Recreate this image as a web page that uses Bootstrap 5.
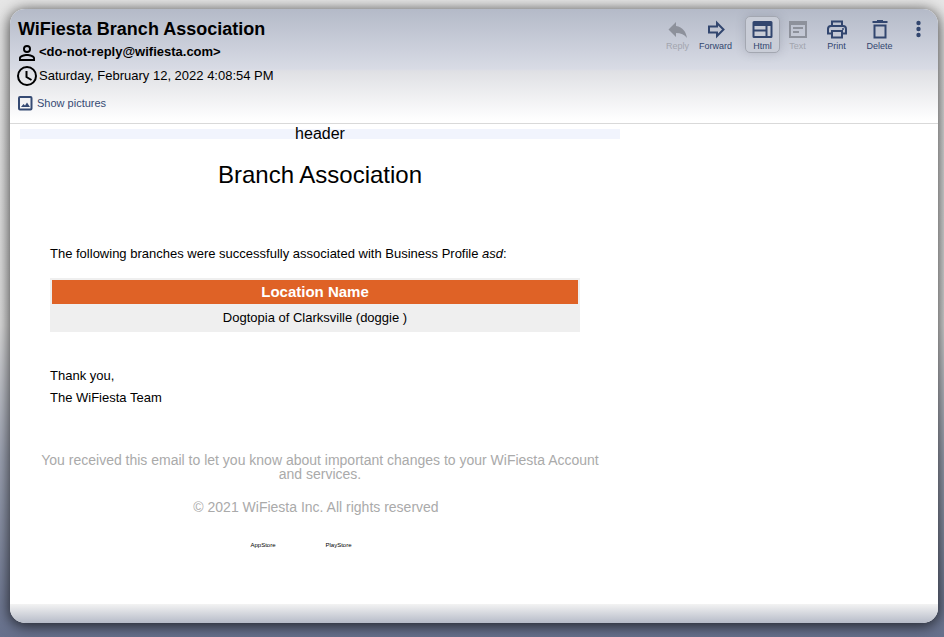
<!DOCTYPE html>
<html lang="en">
<head>
<meta charset="utf-8">
<meta name="viewport" content="width=device-width, initial-scale=1">
<title>WiFiesta Branch Association</title>
<link href="https://cdn.jsdelivr.net/npm/bootstrap@5.3.0/dist/css/bootstrap.min.css" rel="stylesheet">
<style>
html{height:100%;background:linear-gradient(#e6e6e6 0,#dcdcdc 51%,#9ea4b4 72%,#66708c 100%)}
body{min-height:100vh;background:transparent;font-family:"Liberation Sans",Arial,sans-serif;color:#000;font-size:13px;line-height:20px;padding:9px 6px 14px 10px}
.mail-window{border-radius:15px;overflow:hidden;background:#fff;box-shadow:0 2px 14px 1px rgba(0,0,0,.7)}
.mail-head{min-height:115px;padding:9px 3px 0 8px;border-bottom:1px solid #d9d9d9;background:linear-gradient(#b4bac8 0,#d8dbe5 60px,#dfe0e4 62px,#fff 112px)}
.mail-head h1{font-size:18px;line-height:22px;font-weight:700}
.meta-row{line-height:24px;height:24px}
.meta-row svg{margin-left:-2px;margin-right:-1px}
.show-pics{font-size:11px;line-height:16px;color:#354a73;margin-top:7px}
.toolbar-row{margin-top:-2px;column-gap:3px}
.tool{display:flex;flex-direction:column;align-items:center;border:1px solid transparent;border-radius:5px;background:none;color:#32466f;font-size:9px;line-height:10px;padding:2px 0 0;width:35px;height:37px}
.tool:disabled{color:#8d919b}
.tool:disabled span{color:#a2a5ae}
.tool.pressed{border-color:#a3a7b1;background:#c9cdd7;box-shadow:0 0 10px rgba(90,95,110,.25)}
.view-switch{margin:0 1px 0 9px}
.tool-delete{margin-left:5px}
.letter{max-width:600px;margin-left:10px;padding-top:5px}
.banner{background:#f1f4fd;height:10px;line-height:10px;font-size:16px}
.letter h2{font-size:24px;line-height:28px;margin-top:22px;font-weight:400}
.letter-text{padding:0 40px 0 30px;margin-top:55px}
.branches{border-collapse:separate;border-spacing:2px;background:#efefef;margin-top:14px}
.branches th{background:#df6226;color:#fff;font-size:15px;line-height:24px;padding:0}
.branches td{line-height:22px;height:24px;padding:0}
.thanks{line-height:22px;margin-top:33px}
.legal{color:#aaa;font-size:14px;line-height:14px;margin-top:44px}
.rights{margin-top:19px}
.stores{font-size:6px;line-height:8px;gap:50px;margin:27px 0 0 -38px}
.stores a{color:#000}
.mail-foot{height:19px;background:linear-gradient(#f3f3f3,#b6bbc8)}
</style>
</head>
<body class="d-flex flex-column">
<main class="mail-window d-flex flex-column flex-grow-1">
<header class="mail-head d-flex justify-content-between">
<div>
<h1 class="mb-0">WiFiesta Branch Association</h1>
<div class="meta-row d-flex align-items-center fw-bold"><svg width="24" height="24" viewBox="0 0 24 24" aria-hidden="true"><path transform="translate(-1 1)" d="M12 5.900a2.100 2.100 0 1 1 0 4.200 2.100 2.100 0 0 1 0-4.200m0 9c2.970 0 6.100 1.460 6.100 2.100v1.100H5.900V17c0-.640 3.130-2.100 6.100-2.100M12 4a4 4 0 1 0 0 8 4 4 0 0 0 0-8zm0 9c-2.670 0-8 1.340-8 4v3h16v-3c0-2.660-5.330-4-8-4z"/></svg><span>&lt;do-not-reply@wifiesta.com&gt;</span></div>
<div class="meta-row d-flex align-items-center"><svg width="24" height="24" viewBox="0 0 24 24" fill="none" stroke="#000" stroke-width="2" aria-hidden="true"><circle cx="11" cy="12" r="9"/><path d="M10.500 7v6l5 3"/></svg><span>Saturday, February 12, 2022 4:08:54 PM</span></div>
<a href="#" class="show-pics d-flex align-items-center text-decoration-none"><svg class="me-1" width="15" height="15" viewBox="0 0 15 15" fill="none" stroke="currentColor" stroke-width="2" aria-hidden="true"><rect x="1" y="1" width="12.500" height="12.500" rx="1"/><path d="M3 11l2.500-3 1.500 1.500 2-3 3 4.500z" fill="currentColor" stroke="none"/></svg><span>Show pictures</span></a>
</div>
<nav class="toolbar-row d-flex align-items-start" aria-label="Message actions">
<button class="tool" disabled><svg width="24" height="22" viewBox="0 0 24 22" aria-hidden="true"><path d="M10 7V3L2.500 10.500 10 18v-4c5 0 8.500 1.500 11 5-1-6-4-11-11-12z" fill="currentColor"/></svg><span>Reply</span></button>
<button class="tool"><svg width="24" height="22" viewBox="0 0 24 22" aria-hidden="true"><path d="M5 7.500h8V4l6.500 6.500L13 17v-3.500H5z" fill="none" stroke="currentColor" stroke-width="2"/></svg><span>Forward</span></button>
<div class="view-switch d-flex">
<button class="tool pressed" aria-pressed="true"><svg width="24" height="22" viewBox="0 0 24 22" aria-hidden="true"><path fill-rule="evenodd" d="M3 2h17q1.500 0 1.500 1.500v14q0 1.500-1.500 1.500H3q-1.500 0-1.500-1.500v-14Q1.500 2 3 2zM3.500 7v3.500h11V7zm0 5.500V17h11v-4.500zM16.500 7v10h3V7z" fill="currentColor"/></svg><span>Html</span></button>
<button class="tool" disabled><svg width="24" height="22" viewBox="0 0 24 22" aria-hidden="true"><path d="M4 3v15h16V3zM3 4h18M7 9h10M7 13h6" fill="none" stroke="currentColor" stroke-width="2"/><path d="M3 2h18v4H3z" fill="currentColor"/></svg><span>Text</span></button>
</div>
<button class="tool"><svg width="24" height="22" viewBox="0 0 24 22" aria-hidden="true"><path d="M7 6V2.500h10V6M7 14.500H3V10q0-3 3-3h12q3 0 3 3v4.500h-4M7 12h10v6.500H7z" fill="none" stroke="currentColor" stroke-width="2"/><circle cx="18" cy="10" r="1" fill="currentColor"/></svg><span>Print</span></button>
<button class="tool tool-delete"><svg width="24" height="22" viewBox="0 0 24 22" aria-hidden="true"><path d="M4.500 3h15M9 2h6M6.500 6.500h11v12h-11z" fill="none" stroke="currentColor" stroke-width="2"/></svg><span>Delete</span></button>
<button class="tool" aria-label="More actions"><svg width="24" height="22" viewBox="0 0 24 22" fill="currentColor" aria-hidden="true"><circle cx="12.500" cy="4" r="2.200"/><circle cx="12.500" cy="10" r="2.200"/><circle cx="12.500" cy="16" r="2.200"/></svg></button>
</nav>
</header>
<article class="letter flex-grow-1 w-100">
<div class="banner text-center">header</div>
<h2 class="text-center mb-0">Branch Association</h2>
<div class="letter-text">
<p class="mb-0">The following branches were successfully associated with Business Profile <em>asd</em>:</p>
<table class="branches w-100 text-center"><thead><tr><th scope="col">Location Name</th></tr></thead><tbody><tr><td>Dogtopia of Clarksville (doggie )</td></tr></tbody></table>
<p class="thanks mb-0">Thank you,<br>The WiFiesta Team</p>
</div>
<div class="legal text-center px-3"><p class="mb-0">You received this email to let you know about important changes to your WiFiesta Account and services.</p><p class="rights mb-0 pe-2">© 2021 WiFiesta Inc. All rights reserved</p></div>
<div class="stores d-flex justify-content-center"><a class="text-decoration-none" href="#">AppStore</a><a class="text-decoration-none" href="#">PlayStore</a></div>
</article>
<footer class="mail-foot"></footer>
</main>
<script src="https://cdn.jsdelivr.net/npm/bootstrap@5.3.0/dist/js/bootstrap.bundle.min.js"></script>
</body>
</html>
